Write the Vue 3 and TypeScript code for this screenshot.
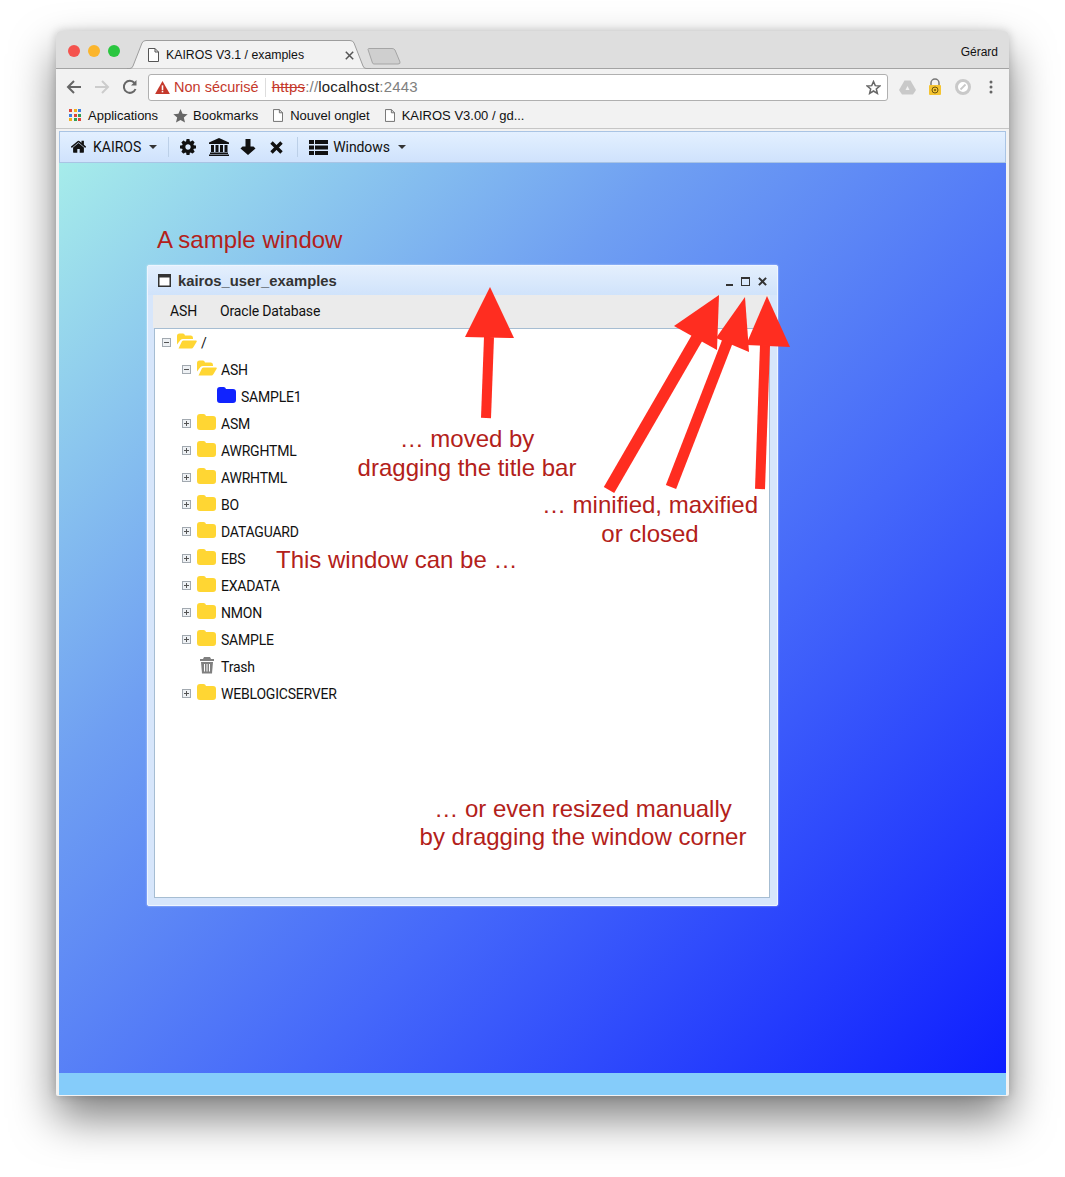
<script setup lang="ts">
interface TreeRow {
  label: string
  level: number
  toggle?: 'plus' | 'minus'
  icon: 'folder' | 'open' | 'blue' | 'trash'
}

const rows: TreeRow[] = [
  { label: '/', level: 0, toggle: 'minus', icon: 'open' },
  { label: 'ASH', level: 1, toggle: 'minus', icon: 'open' },
  { label: 'SAMPLE1', level: 2, icon: 'blue' },
  { label: 'ASM', level: 1, toggle: 'plus', icon: 'folder' },
  { label: 'AWRGHTML', level: 1, toggle: 'plus', icon: 'folder' },
  { label: 'AWRHTML', level: 1, toggle: 'plus', icon: 'folder' },
  { label: 'BO', level: 1, toggle: 'plus', icon: 'folder' },
  { label: 'DATAGUARD', level: 1, toggle: 'plus', icon: 'folder' },
  { label: 'EBS', level: 1, toggle: 'plus', icon: 'folder' },
  { label: 'EXADATA', level: 1, toggle: 'plus', icon: 'folder' },
  { label: 'NMON', level: 1, toggle: 'plus', icon: 'folder' },
  { label: 'SAMPLE', level: 1, toggle: 'plus', icon: 'folder' },
  { label: 'Trash', level: 1, icon: 'trash' },
  { label: 'WEBLOGICSERVER', level: 1, toggle: 'plus', icon: 'folder' },
]

const bookmarks = ['Nouvel onglet', 'KAIROS V3.00 / gd...']
const gridColors = ['#e0463a', '#f2b01e', '#3d7fe0', '#3d7fe0', '#e0463a', '#2f9e57', '#f2b01e', '#2f9e57', '#e0463a']

const folderPath = 'M0 3 Q0 0 3 0 H6.500 Q8.500 0 9 2 H16 Q19 2 19 5 V13 Q19 16 16 16 H3 Q0 16 0 13 Z'
const homePath = 'M1472 992v480q0 26-19 45t-45 19h-384v-384h-256v384h-384q-26 0-45-19t-19-45v-480q0-1 .5-3t.5-3l575-474 575 474q1 2 1 6zm223-69l-62 74q-8 9-21 11h-3q-13 0-21-7l-692-577-692 577q-12 8-24 7-13-2-21-11l-62-74q-8-10-7-23.500t11-21.500l719-599q32-26 76-26t76 26l244 204v-195q0-14 9-23t23-9h192q14 0 23 9t9 23v408l219 182q10 8 11 21.500t-7 23.500z'
const cogPath = 'M1152 896q0-106-75-181t-181-75-181 75-75 181 75 181 181 75 181-75 75-181zm512-109v222q0 12-8 23t-20 13l-185 28q-19 54-39 91 35 50 107 138 10 12 10 25t-9 23q-27 37-99 108t-94 71q-12 0-26-9l-138-108q-44 23-91 38-16 136-29 186-7 28-36 28h-222q-14 0-24.500-8.500t-11.500-21.500l-28-184q-49-16-90-37l-141 107q-10 9-25 9-14 0-25-11-126-114-165-168-7-10-7-23 0-12 8-23 15-21 51-66.500t54-70.500q-27-50-41-99l-183-27q-13-2-21-12.500t-8-23.500v-222q0-12 8-23t19-13l186-28q14-46 39-92-40-57-107-138-10-12-10-24 0-10 9-23 26-36 98.500-107.500t94.500-71.500q13 0 26 10l138 107q44-23 91-38 16-136 29-186 7-28 36-28h222q14 0 24.500 8.500t11.500 21.500l28 184q49 16 90 37l142-107q9-9 24-9 13 0 25 10 129 119 165 170 7 8 7 22 0 12-8 23-15 21-51 66.500t-54 70.500q26 50 41 98l183 28q13 2 21 12.500t8 23.500z'
</script>

<template>
  <div class="page">
    <div class="browser">
      <header class="tabstrip">
        <div class="lights">
          <i class="light red"></i><i class="light amber"></i><i class="light green"></i>
        </div>
        <div class="tab">
          <svg class="tab-shape" width="244" height="29" viewBox="0 0 244 29">
            <path d="M0 28.500 H3 Q5 28.500 6 26 L15 3 Q16 0.500 19 0.500 H223 Q226 0.500 227 3 L236 26 Q237 28.500 239 28.500 H244 V29 H0 Z" fill="#f2f2f2" stroke="#9d9d9d" />
          </svg>
          <svg class="doc" width="11" height="14" viewBox="0 0 11 14">
            <path d="M.5.5 H7 L10.500 4 V13.500 H.5 Z M7 .5 V4 H10.500" fill="#fff" stroke="#555" />
          </svg>
          <span class="tab-title">KAIROS V3.1 / examples</span>
          <svg class="tab-close" width="9" height="9" viewBox="0 0 9 9" stroke="#555" stroke-width="1.500">
            <path d="M.8.8 L8.200 8.200 M8.200 .8 L.8 8.200" />
          </svg>
        </div>
        <svg class="newtab" width="34" height="17" viewBox="0 0 34 17">
          <path d="M1 1.500 Q1 .5 2 .5 H25 Q27 .5 28 2 L33 14 Q33.500 16 31 16 H7 Q6 16 5.500 15 Z" fill="#cfcfcf" stroke="#a5a5a5" />
        </svg>
        <span class="user">Gérard</span>
      </header>

      <div class="toolbar">
        <svg class="nav" width="16" height="16" viewBox="0 0 16 16" fill="none" stroke="#666" stroke-width="2">
          <path d="M15 8 H2 M8 2 L2 8 L8 14" />
        </svg>
        <svg class="nav" width="16" height="16" viewBox="0 0 16 16" fill="none" stroke="#ccc" stroke-width="2">
          <path d="M1 8 H14 M8 2 L14 8 L8 14" />
        </svg>
        <svg class="nav" width="16" height="16" viewBox="0 0 16 16" fill="none" stroke="#666" stroke-width="2">
          <path d="M13.500 10 A6 6 0 1 1 12.500 4" />
          <path d="M14.500 1 V6.500 H9 Z" fill="#666" stroke="none" />
        </svg>
        <div class="omnibox">
          <svg class="warn" width="15" height="13" viewBox="0 0 17 15">
            <path d="M8.500 0 L17 15 H0 Z" fill="#c5392c" />
            <rect x="7.600" y="5" width="1.800" height="5.500" fill="#fff" />
            <rect x="7.600" y="11.300" width="1.800" height="1.800" fill="#fff" />
          </svg>
          <span class="insecure">Non sécurisé</span>
          <span class="omni-sep"></span>
          <span class="url"><s class="scheme">https</s><span class="dim">://</span>localhost<span class="dim">:2443</span></span>
          <svg class="star" width="15" height="15" viewBox="0 0 24 24" fill="none" stroke="#666" stroke-width="2.400">
            <path d="M12 2.500 L14.800 9 L22 9.600 L16.500 14.300 L18.200 21.400 L12 17.600 L5.800 21.400 L7.500 14.300 L2 9.600 L9.200 9 Z" />
          </svg>
        </div>
        <div class="extensions">
          <span class="ext">
            <svg width="17" height="15" viewBox="0 0 17 15">
              <path d="M5.500 .5 H11.500 L17 10 L14 14.500 H3 L0 10 Z" fill="#c9c9c9" />
              <path d="M8.500 6 L10.500 10 H6.500 Z" fill="#f2f2f2" />
            </svg>
          </span>
          <span class="ext">
            <svg width="14" height="18" viewBox="0 0 14 18">
              <path d="M3 8 V5 A4 4 0 0 1 11 5 V8" fill="none" stroke="#777" stroke-width="1.500" />
              <rect x="1" y="7" width="12" height="10" rx="1" fill="#f5c431" />
              <circle cx="7" cy="12" r="3" fill="none" stroke="#6b5410" stroke-width="1" />
              <circle cx="7" cy="12" r="1" fill="#6b5410" />
            </svg>
          </span>
          <span class="ext">
            <svg width="16" height="16" viewBox="0 0 16 16">
              <circle cx="8" cy="8" r="6.500" fill="#fff" stroke="#c9c9c9" stroke-width="3" />
              <path d="M5.500 10.500 L10.500 5.500" stroke="#c9c9c9" stroke-width="1.800" />
            </svg>
          </span>
          <span class="ext">
            <svg width="4" height="14" viewBox="0 0 4 14" fill="#666">
              <circle cx="2" cy="2" r="1.500" /><circle cx="2" cy="7" r="1.500" /><circle cx="2" cy="12" r="1.500" />
            </svg>
          </span>
        </div>
      </div>

      <nav class="bookmarks">
        <span class="bookmark">
          <span class="apps"><i v-for="(c, i) in gridColors" :key="i" :style="{ background: c }"></i></span>
          Applications
        </span>
        <span class="bookmark">
          <svg width="15" height="15" viewBox="0 0 24 24" fill="#666">
            <path d="M12 1.500 L15.300 9 L23.500 9.800 L17.300 15.200 L19.200 23.200 L12 19 L4.800 23.200 L6.700 15.200 L.5 9.800 L8.700 9 Z" />
          </svg>
          Bookmarks
        </span>
        <span v-for="b in bookmarks" :key="b" class="bookmark bookmark-doc">
          <svg width="10" height="13" viewBox="0 0 11 14">
            <path d="M.5.5 H7 L10.500 4 V13.500 H.5 Z M7 .5 V4 H10.500" fill="#fff" stroke="#666" />
          </svg>
          {{ b }}
        </span>
      </nav>

      <main class="viewport">
        <div class="appbar">
          <span class="appmenu">
            <svg width="17" height="15" viewBox="0 0 1792 1600"><path :d="homePath" transform="translate(0,-180)" fill="#111" /></svg>
            <span class="appmenu-label">KAIROS</span>
            <i class="caret"></i>
          </span>
          <span class="appbar-sep"></span>
          <span class="appicons">
            <svg width="16" height="16" viewBox="128 128 1536 1536"><path :d="cogPath" fill="#111" /></svg>
            <svg class="icon-bank" width="20" height="18" viewBox="0 0 20 18" fill="#111">
              <path d="M10 0 L20 4.500 V6 H0 V4.500 Z" />
              <rect x="2" y="7" width="3" height="7" /><rect x="6.500" y="7" width="3" height="7" />
              <rect x="11" y="7" width="3" height="7" /><rect x="15.500" y="7" width="3" height="7" />
              <rect x="1" y="14.500" width="18" height="1.500" /><rect x="0" y="16.500" width="20" height="1.500" />
            </svg>
            <svg width="16" height="16" viewBox="0 0 16 16" fill="#111">
              <path d="M5.500 0 H10.500 V7.500 H13.500 L15.500 9.500 L8 16 L.5 9.500 L2.500 7.500 H5.500 Z" />
            </svg>
            <svg class="icon-x" width="13" height="13" viewBox="0 0 13 13" stroke="#111" stroke-width="3.400">
              <path d="M1.500 1.500 L11.500 11.500 M11.500 1.500 L1.500 11.500" />
            </svg>
          </span>
          <span class="appbar-sep"></span>
          <span class="appmenu">
            <svg width="19" height="15" viewBox="0 0 19 15" fill="#111">
              <rect width="5" height="4" /><rect x="6" width="13" height="4" />
              <rect y="5.500" width="5" height="4" /><rect x="6" y="5.500" width="13" height="4" />
              <rect y="11" width="5" height="4" /><rect x="6" y="11" width="13" height="4" />
            </svg>
            <span class="appmenu-label label-windows">Windows</span>
            <i class="caret"></i>
          </span>
        </div>

        <div class="desktop">
          <section class="window">
            <div class="win-title">
              <svg width="13" height="13" viewBox="0 0 13 13">
                <rect x=".75" y=".75" width="11.500" height="11.500" fill="#fff" stroke="#333" stroke-width="1.500" />
                <rect x="0" y="0" width="13" height="3.500" fill="#333" />
              </svg>
              <span class="win-name">kairos_user_examples</span>
              <span class="win-tools">
                <i class="tool-min"></i>
                <i class="tool-max"></i>
                <svg width="9" height="9" viewBox="0 0 10 10" stroke="#333" stroke-width="2.200">
                  <path d="M1 1 L9 9 M9 1 L1 9" />
                </svg>
              </span>
            </div>
            <div class="win-menu">
              <span>ASH</span>
              <span>Oracle Database</span>
            </div>
            <div class="tree">
              <div
                v-for="row in rows"
                :key="row.label"
                class="tree-row"
                :style="{ paddingLeft: `${row.level * 20}px` }"
              >
                <span class="toggle" :class="{ 'toggle-empty': !row.toggle }">
                  <template v-if="row.toggle">
                    <i class="toggle-h"></i>
                    <i v-if="row.toggle === 'plus'" class="toggle-v"></i>
                  </template>
                </span>
                <svg v-if="row.icon === 'trash'" class="tree-icon" width="20" height="18" viewBox="0 0 20 18" fill="#808080">
                  <path d="M7 1 H13 L14 3 H17 V5 H3 V3 H6 Z" />
                  <path d="M4 6 H16 L15 17.500 H5 Z" />
                  <path d="M7.500 8 V15.500 M10 8 V15.500 M12.500 8 V15.500" stroke="#fff" stroke-width="1" />
                </svg>
                <svg v-else-if="row.icon === 'open'" class="tree-icon" width="20" height="16" viewBox="0 0 20 16" fill="#ffd633">
                  <path d="M0 11.500 V3 Q0 0.500 2.500 0.500 H6 Q7.500 0.500 8 2.500 H14 Q16 2.500 16 5 V6 H6 Q4.500 6 3.500 7 Z" />
                  <path d="M1.500 15.500 L5 8.300 Q5.500 7.500 6.500 7.500 H19 Q20.300 7.500 19.500 9 L16.500 14 Q15.500 15.500 14.500 15.500 Z" />
                </svg>
                <svg v-else class="tree-icon" width="20" height="16" viewBox="0 0 20 16" :fill="row.icon === 'blue' ? '#1023ff' : '#ffd633'">
                  <path :d="folderPath" />
                </svg>
                <span class="tree-label">{{ row.label }}</span>
              </div>
            </div>
          </section>

          <p class="note note-title">A sample window</p>
          <p class="note note-moved">… moved by<br />dragging the title bar</p>
          <p class="note note-buttons">… minified, maxified<br />or closed</p>
          <p class="note note-can">This window can be …</p>
          <p class="note note-resize">… or even resized manually<br />by dragging the window corner</p>
        </div>
        <div class="statusbar"></div>

        <!-- hand drawn arrows, coordinates are relative to the browser window -->
        <svg class="arrows" width="953" height="1065" viewBox="56 31 953 1065">
          <g fill="#ff2d20" stroke="#ff2d20">
            <path d="M486 418 L489 337" stroke-width="10" fill="none" />
            <path d="M490 287 L514 338 L465 337 Z" stroke="none" />
            <path d="M609 490 L697 338" stroke-width="12" fill="none" />
            <path d="M674 326 L719 295 L717 350 Z" stroke="none" />
            <path d="M671 487 L728 340" stroke-width="11" fill="none" />
            <path d="M745 297 L749 352 L716 338 Z" stroke="none" />
            <path d="M760 489 L765 345" stroke-width="10" fill="none" />
            <path d="M767 296 L790 347 L746 345 Z" stroke="none" />
          </g>
        </svg>
      </main>
    </div>
  </div>
</template>

<style scoped>
.page {
  height: 1177px;
  box-sizing: border-box;
  padding: 31px 0 0 56px;
  overflow: hidden;
}
.browser {
  position: relative;
  width: 953px;
  height: 1065px;
  display: flex;
  flex-direction: column;
  border-radius: 5px 5px 2px 2px;
  background: #f2f2f2;
  box-shadow: 0 22px 44px rgba(0, 0, 0, 0.5), 0 0 10px rgba(0, 0, 0, 0.18);
  font-family: "Liberation Sans", Arial, sans-serif;
  color: #111;
}
.tabstrip {
  position: relative;
  height: 38px;
  flex: none;
  background: #dedede;
  border-radius: 5px 5px 0 0;
  border-bottom: 1px solid #a3a3a3;
  box-sizing: border-box;
}
.lights {
  position: absolute;
  left: 12px;
  top: 14px;
  display: flex;
  gap: 8px;
}
.light {
  width: 12px;
  height: 12px;
  border-radius: 50%;
}
.red { background: #f4534e; }
.amber { background: #fbb52c; }
.green { background: #2ac63f; }
.tab {
  position: absolute;
  left: 71px;
  top: 9px;
  width: 244px;
  height: 29px;
}
.tab-shape {
  position: absolute;
  left: 0;
  top: 0;
}
.doc {
  position: absolute;
  left: 21px;
  top: 8px;
}
.tab-title {
  position: absolute;
  left: 39px;
  top: 8px;
  font-size: 12.300px;
  line-height: 14px;
  white-space: nowrap;
}
.tab-close {
  position: absolute;
  left: 218px;
  top: 11px;
}
.newtab {
  position: absolute;
  left: 311px;
  top: 17px;
}
.user {
  position: absolute;
  right: 11px;
  top: 14px;
  font-size: 12px;
  line-height: 14px;
}
.toolbar {
  height: 36px;
  flex: none;
  display: flex;
  align-items: center;
  padding-left: 10px;
  box-sizing: border-box;
  background: #f2f2f2;
}
.nav {
  margin-right: 12px;
}
.omnibox {
  display: flex;
  align-items: center;
  width: 740px;
  height: 27px;
  margin-left: -2px;
  box-sizing: border-box;
  background: #fff;
  border: 1px solid #b0b0b0;
  border-radius: 3px;
  font-size: 14.500px;
}
.warn {
  margin-left: 6px;
}
.insecure {
  margin-left: 4px;
  color: #c5392c;
}
.omni-sep {
  width: 1px;
  height: 19px;
  margin: 0 6px;
  background: #ddd;
}
.url {
  flex: 1;
  padding-bottom: 2px;
  font-size: 15px;
  letter-spacing: 0.2px;
  color: #222;
}
.scheme {
  color: #c5392c;
}
.dim {
  color: #808080;
}
.star {
  margin-right: 6px;
}
.extensions {
  display: flex;
  align-items: center;
  margin-left: 5px;
}
.ext {
  width: 28px;
  display: flex;
  justify-content: center;
}
.bookmarks {
  height: 24px;
  flex: none;
  display: flex;
  align-items: center;
  gap: 15px;
  padding: 0 0 3px 12px;
  box-sizing: border-box;
  border-bottom: 1px solid #c6c6c6;
  font-size: 13px;
}
.bookmark {
  display: inline-flex;
  align-items: center;
  gap: 5px;
  white-space: nowrap;
}
.bookmark-doc {
  gap: 7px;
}
.apps {
  display: grid;
  grid-template-columns: repeat(3, 3px);
  gap: 1.500px;
  margin: 0 2px 0 1px;
}
.apps i {
  width: 3px;
  height: 3px;
}
.viewport {
  position: relative;
  flex: 1;
  display: flex;
  flex-direction: column;
  margin: 2px 3px 1px;
  min-height: 0;
}
.appbar {
  height: 32px;
  flex: none;
  display: flex;
  align-items: center;
  box-sizing: border-box;
  padding-left: 10px;
  background: linear-gradient(#e3f0ff, #cfe2fc);
  border: 1px solid #a9c4e4;
  font-family: Roboto, "Liberation Sans", sans-serif;
  font-size: 14px;
}
.appmenu {
  display: inline-flex;
  align-items: center;
}
.appmenu-label {
  margin-left: 6px;
}
.label-windows {
  margin-left: 5px;
  letter-spacing: -0.1px;
}
.caret {
  width: 0;
  height: 0;
  margin-left: 8px;
  border: 4px solid transparent;
  border-top-color: #333;
  border-bottom: 0;
}
.appbar-sep {
  width: 1px;
  height: 20px;
  margin: 0 11px;
  background: #bcd0e8;
}
.appicons {
  display: inline-flex;
  align-items: center;
  gap: 11px;
}
.icon-bank {
  margin-left: 2px;
}
.icon-x {
  margin: 0 3px 0 3px;
}
.desktop {
  position: relative;
  flex: 1;
  min-height: 0;
  background: linear-gradient(135deg, #a6ecea 0%, #6f9ff2 33%, #4568fa 62%, #0e1eff 100%);
}
.statusbar {
  height: 22px;
  flex: none;
  background: #85ccfa;
}
.window {
  position: absolute;
  left: 88px;
  top: 102px;
  width: 631px;
  height: 641px;
  box-sizing: border-box;
  display: flex;
  flex-direction: column;
  padding: 0 7px 7px 5px;
  background: #d7e6fb;
  border: 1px solid #eef5ff;
  border-radius: 2px;
  box-shadow: 0 0 2px rgba(255, 255, 255, 0.7);
}
.win-title {
  height: 29px;
  flex: none;
  display: flex;
  align-items: center;
  margin: 0 -7px 0 -5px;
  padding: 0 10px 0 10px;
  background: linear-gradient(#e4effd, #d0e3fb);
  color: #333;
}
.win-name {
  margin-left: 7px;
  font-size: 14.800px;
  font-weight: 700;
}
.win-tools {
  margin: 1px 0 0 auto;
  display: inline-flex;
  align-items: center;
  gap: 8px;
}
.tool-min {
  width: 7px;
  height: 2px;
  margin-top: 7px;
  background: #333;
}
.tool-max {
  width: 7px;
  height: 6px;
  border: 1px solid #333;
  border-top-width: 2px;
  box-sizing: content-box;
}
.win-menu {
  height: 33px;
  flex: none;
  display: flex;
  align-items: center;
  gap: 23px;
  padding: 0 0 2px 17px;
  box-sizing: border-box;
  background: #ebebeb;
  font-family: Roboto, "Liberation Sans", sans-serif;
  font-size: 14px;
  letter-spacing: -0.15px;
}
.tree {
  flex: 1;
  min-height: 0;
  margin-left: 1px;
  padding: 0 0 0 7px;
  background: #fff;
  border: 1px solid #a6bdd2;
  box-sizing: border-box;
}
.tree-row {
  height: 27px;
  display: flex;
  align-items: center;
  font-family: Roboto, "Liberation Sans", sans-serif;
  font-size: 14px;
  letter-spacing: -0.2px;
}
.toggle {
  position: relative;
  width: 9px;
  height: 9px;
  flex: none;
  box-sizing: border-box;
  margin-right: 6px;
  background: #eef1f4;
  border: 1px solid #a2a9b0;
}
.toggle-empty {
  background: none;
  border: 0;
}
.toggle-h {
  position: absolute;
  left: 1px;
  top: 3px;
  width: 5px;
  height: 1px;
  background: #555;
}
.toggle-v {
  position: absolute;
  left: 3px;
  top: 1px;
  width: 1px;
  height: 5px;
  background: #555;
}
.tree-icon {
  flex: none;
  margin: -4px 4px 0 0;
}
.tree-label {
  white-space: nowrap;
  color: #111;
}
.note {
  position: absolute;
  margin: 0;
  color: #b3211a;
  font-size: 24px;
  line-height: 29px;
  white-space: nowrap;
}
.note-title { left: 98px; top: 62px; }
.note-moved { left: 208px; top: 262px; width: 400px; line-height: 28.500px; text-align: center; }
.note-buttons { left: 391px; top: 327px; width: 400px; text-align: center; }
.note-can { left: 217px; top: 382px; }
.note-resize { left: 324px; top: 632px; width: 400px; line-height: 28px; text-align: center; }
.arrows {
  position: absolute;
  left: -3px;
  top: -100px;
  pointer-events: none;
}
</style>

<style>
body {
  background: #fff;
}
</style>
